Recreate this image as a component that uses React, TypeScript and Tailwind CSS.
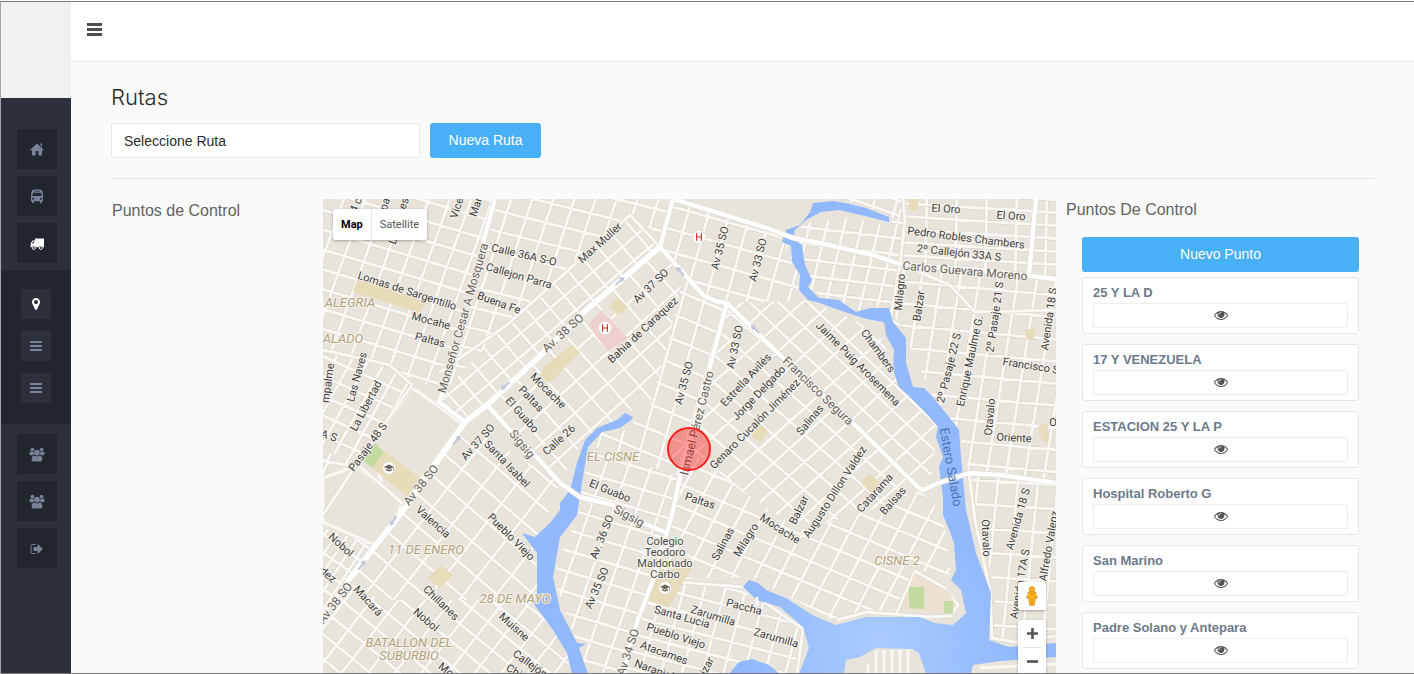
import React from "react";

type Pt = [number, number];

/* ---------- Icons ---------- */

const HomeIcon = () => (
  <svg viewBox="0 0 14 13" className="h-[13px] w-[14px]" fill="currentColor" aria-hidden="true">
    <path d="M7 0.4 13.8 6.8 12.9 7.4H12V12.4H8.4V8H5.7V12.4H2V7.4H1L0.2 6.8Z" />
    <path d="M9.8 0.6H12V4L10.8 2.9V1.6H9.8Z" />
  </svg>
);

const BusIcon = () => (
  <svg viewBox="0 0 14 15" className="h-[15px] w-[14px]" fill="currentColor" aria-hidden="true">
    <path
      fillRule="evenodd"
      d="M4 0.5H10Q12.4 0.7 12.6 3L13 7V12.3H12V13.3Q12 14.4 11 14.4T10 13.3V12.3H4V13.3Q4 14.4 3 14.4T2 13.3V12.3H1V7L1.4 3Q1.6 0.7 4 0.5ZM4.3 1.7V2.5H9.7V1.7ZM2.9 3.8 2.4 7H11.6L11.1 3.8ZM3 8.8A1 1 0 1 0 3 10.8 1 1 0 0 0 3 8.8ZM11 8.8A1 1 0 1 0 11 10.8 1 1 0 0 0 11 8.8Z"
    />
  </svg>
);

const TruckIcon = () => (
  <svg viewBox="0 0 14 12" className="h-[12px] w-[14px]" fill="currentColor" aria-hidden="true">
    <path fillRule="evenodd" d="M5 0.5H14V9.2H12.9A2.2 2.2 0 0 0 8.7 9.2H6A2.2 2.2 0 0 0 1.8 9.2H0.3V8.4H0.7V5.3L2.6 2.6H5ZM2 5.3H4.2V3.6H3.1Z" />
    <circle cx="3.9" cy="10" r="1.5" fill="none" stroke="currentColor" strokeWidth="0.9" />
    <circle cx="10.8" cy="10" r="1.5" fill="none" stroke="currentColor" strokeWidth="0.9" />
  </svg>
);

const MarkerIcon = () => (
  <svg viewBox="0 0 1792 1792" className="size-[14px]" fill="currentColor" aria-hidden="true">
    <path d="M1152 640q0-106-75-181t-181-75-181 75-75 181 75 181 181 75 181-75 75-181zm256 0q0 109-33 179l-364 774q-16 33-47.5 52t-67.5 19-67.5-19-46.5-52l-365-774q-33-70-33-179 0-212 150-362t362-150 362 150 150 362z" />
  </svg>
);

const ListIcon = () => (
  <svg viewBox="0 0 12 10" className="h-[10px] w-[12px]" fill="currentColor" aria-hidden="true">
    <path d="M0 0H12V2H0ZM0 4H12V6H0ZM0 8H12V10H0Z" />
  </svg>
);

const GroupIcon = () => (
  <svg viewBox="0 0 16 15" className="h-[15px] w-[16px]" fill="currentColor" aria-hidden="true">
    <circle cx="3.4" cy="2.6" r="1.9" />
    <circle cx="12.6" cy="2.6" r="1.9" />
    <ellipse cx="2.7" cy="6.6" rx="2.4" ry="2" />
    <ellipse cx="13.3" cy="6.6" rx="2.4" ry="2" />
    <circle cx="8" cy="5.6" r="2.9" />
    <path d="M5.2 8.4Q8 10.3 10.8 8.4 13.4 8.8 13.4 12.4 13.4 14.6 11.4 14.6H4.6Q2.6 14.6 2.6 12.4 2.6 8.8 5.2 8.4Z" />
  </svg>
);

const SignOutIcon = () => (
  <svg viewBox="0 0 1792 1792" className="size-[14px]" fill="currentColor" aria-hidden="true">
    <path d="M704 1440q0 4 1 20t.5 26.5-3 23.5-10 19.5-20.5 6.5h-320q-119 0-203.5-84.5t-84.5-203.5v-704q0-119 84.5-203.5t203.5-84.5h320q13 0 22.5 9.5t9.5 22.5q0 4 1 20t.5 26.5-3 23.5-10 19.5-20.5 6.5h-320q-66 0-113 47t-47 113v704q0 66 47 113t113 47h312l11.5 1 11.5 3 8 5.5 7 9 2 13.5zm928-544q0 26-19 45l-544 544q-19 19-45 19t-45-19-19-45v-288h-448q-26 0-45-19t-19-45v-384q0-26 19-45t45-19h448v-288q0-26 19-45t45-19 45 19l544 544q19 19 19 45z" />
  </svg>
);

const EyeIcon = () => (
  <svg viewBox="0 0 1792 1792" className="size-[14px]" fill="currentColor" aria-hidden="true">
    <path d="M1664 960q-152-236-381-353 61 104 61 225 0 185-131.5 316.5t-316.5 131.5-316.5-131.5-131.5-316.5q0-121 61-225-229 117-381 353 133 205 333.5 326.5t434.5 121.5 434.5-121.5 333.5-326.5zm-720-384q0-20-14-34t-34-14q-125 0-214.5 89.5t-89.5 214.5q0 20 14 34t34 14 34-14 14-34q0-86 61-147t147-61q20 0 34-14t14-34zm848 384q0 34-20 69-140 230-376.5 368.5t-499.5 138.5-499.5-139-376.5-368q-20-35-20-69t20-69q140-229 376.5-368t499.5-139 499.5 139 376.5 368q20 35 20 69z" />
  </svg>
);

/* ---------- Map data ---------- */

// A district is an outline filled by families of parallel streets: [dx, dy, spacing, offset].
type District = { area: string; streets: [number, number, number, number][] };

const districts: District[] = [
  { area: "323,199 495,199 483,243 447,388 412,383 390,365 323,350", streets: [[100, 30, 19, 3], [-36, 100, 20, 6]] },
  { area: "495,199 673,199 665,238 630,215 507,325 447,388 483,243", streets: [[100, 25, 20, 8], [-33, 100, 20, 4]] },
  { area: "630,215 660,247 465,422 439,402 447,388 507,325", streets: [[85, 100, 19, 5], [-100, 85, 18, 8]] },
  { area: "660,247 487,405 560,483 583,440 625,413 650,405 668,345 683,275", streets: [[-100, 90, 23, 2], [88, 100, 22, 5]] },
  { area: "683,275 703,295 727,303 713,355 680,477 590,445 602,432 625,430 650,405 668,345", streets: [[-28, 100, 21, 2], [100, 42, 23, 9]] },
  { area: "673,199 767,228 785,240 805,290 810,300 727,303 703,295 660,247", streets: [[-28, 100, 20, 2], [100, 28, 22, 4]] },
  { area: "727,303 713,355 688,450 740,490 800,530 870,510 921,490 853,423", streets: [[-100, 90, 20, 4], [100, 88, 21, 7]] },
  { area: "727,303 810,300 855,320 883,340 893,370 938,427 930,480 921,490", streets: [[-100, 90, 20, 4], [100, 95, 20, 2]] },
  { area: "672,515 688,450 740,490 800,530 870,510 921,490 943,515 951,575 915,570 898,610 836,621 749,577 653,580", streets: [[100, 42, 21, 6], [-52, 100, 21, 3]] },
  { area: "590,445 680,477 653,580 625,674 588,674 553,577 577,515", streets: [[100, 30, 20, 5], [-35, 100, 22, 4]] },
  { area: "653,580 743,587 803,629 797,674 625,674", streets: [[100, 26, 17, 2], [-27, 100, 20, 6]] },
  { area: "465,422 560,483 540,535 537,600 480,600 380,600 347,582 402,515", streets: [[-78, 100, 26, 3], [100, 86, 24, 6]] },
  { area: "347,582 380,600 537,600 567,653 572,674 323,674 323,615", streets: [[-78, 100, 21, 3], [100, 82, 19, 6]] },
  { area: "323,350 390,365 412,385 373,440 355,462 323,450", streets: [[-55, 100, 15, 3], [100, 45, 18, 6]] },
  { area: "323,450 355,462 323,515", streets: [[-40, 100, 18, 3], [100, 20, 18, 6]] },
  { area: "323,528 375,545 347,582 323,610", streets: [[-65, 100, 10, 3], [100, 70, 15, 6]] },
  { area: "806,222 850,218 889,225 903,205 903,265 890,308 856,312 806,288 782,242", streets: [[100, 12, 16, 3], [-24, 100, 17, 1]] },
  { area: "812,199 903,199 900,225 889,215 850,202", streets: [[100, 35, 14, 3], [-30, 100, 22, 1]] },
  { area: "903,199 1056,199 1056,279 903,265", streets: [[100, 6, 13, 2], [-2, 100, 30, 8]] },
  { area: "903,265 1056,279 1056,483 969,473 959,430 933,397 906,338 890,308", streets: [[100, 9, 22, 3], [-16, 100, 19, 5]] },
  { area: "969,473 1056,483 1056,641 993,638 995,593", streets: [[100, 6, 24, 3], [-10, 100, 20, 9]] },
];

function hatch([dx, dy, gap, phase]: [number, number, number, number]): string {
  const len = Math.hypot(dx, dy);
  const ux = dx / len;
  const uy = dy / len;
  let d = "";
  for (let k = -40; k <= 40; k++) {
    const off = k * gap + phase;
    const cx = 690 - uy * off;
    const cy = 436 + ux * off;
    d += `M${(cx - ux * 500).toFixed(1)} ${(cy - uy * 500).toFixed(1)}L${(cx + ux * 500).toFixed(1)} ${(cy + uy * 500).toFixed(1)}`;
  }
  return d;
}

const lanes = [
  "M630 215 507 325 440 372",
  "M630 215 660 247",
  "M412 385 373 440 323 515",
  "M355 462 402 503",
  "M323 350 390 365 412 385",
  "M727 303 690 440 672 458",
  "M903 199 905 220 900 265 890 320 900 325",
  "M903 265 950 285 975 312 1056 310",
  "M915 571 945 588 958 605 950 616 930 617 866 612 838 620",
  "M915 571 897 612",
  "M969 473 975 520 990 590 992 638 1015 642 1056 636",
  "M653 580 743 587 803 629 797 674",
];

const water = [
  "M810 212 800 225 786 230 782 242 791 246 792 262 800 275 799 290 808 300 820 303 839 310 866 319 884 322 886 335 894 350 893 370 899 387 913 400 926 413 938 427 936 437 943 457 939 467 943 497 943 515 948 527 954 543 956 570 951 580 961 590 966 613 953 625 935 623 919 617 866 617 836 625 814 616 786 598 766 590 758 583 749 580 743 587 757 600 780 607 803 627 809 648 799 674H844L846 660 860 657 876 648 912 649 919 653 926 674H971L973 665 1000 661 1056 657V643L1009 647 989 640 991 593 976 553 966 510 961 457 959 430 949 417 933 397 924 388 913 387 906 363 906 338 893 322 889 308 870 308 856 312 839 300 819 298 808 287 812 280 805 265 802 245 793 238 795 230 806 220 821 212 839 210 869 217 889 222 889 217 866 208 850 204 833 201 813 203Z",
  "M625 413 633 417 630 421 620 428 602 432 588 447 583 477 577 515 560 537 553 577 560 610 577 643 586 644 579 648 588 674H572L567 653 553 630 533 603 537 600 537 553 522 533 535 537 550 523 560 510 560 503 570 490 577 463 585 440 597 428 617 420Z",
  "M729 674 739 662 752 659 769 665 780 674Z",
];

const avenues = [
  "M673 199 660 247 585 311 543 353 487 405 465 422 402 512 347 582 323 615",
  "M673 199 767 228 793 238 820 243 873 255 903 265 979 270 1056 279",
  "M660 247 703 295 715 301 727 303 780 355 853 423 918 487Q922 492 927 488L939 483 969 473 1000 475 1056 483",
  "M727 303 713 355 680 477 672 515 653 580 633 633 624 674",
  "M487 405 510 430 537 457 560 483 580 497 613 505 643 523 667 533",
  "M495 199 483 243",
  "M443 393 439 402 465 422",
  "M1036 199 1029 275",
];

const parks: [string, string][] = [
  ["358,277 427,302 420,313 353,292", "#e6dcb9"],
  ["602,310 628,338 608,352 588,325", "#edd0cf"],
  ["617,297 628,307 618,315 608,307", "#e6dcb9"],
  ["538,377 545,366 572,345 580,352 550,383", "#e6dcb9"],
  ["383,450 420,478 408,497 372,468", "#e6dcb9"],
  ["375,443 384,452 372,468 363,460", "#c3dba0"],
  ["760,423 769,432 760,443 751,435", "#e6dcb9"],
  ["869,473 881,483 871,493 861,483", "#e6dcb9"],
  ["1037,427 1048,423 1048,443 1042,440", "#e6dcb9"],
  ["440,565 453,575 440,588 428,578", "#e6dcb9"],
  ["653,570 692,568 668,608 648,600", "#e6dcb9"],
  ["914,574 949,591 956,606 948,614 901,609", "#ece0d0"],
  ["909,587 924,587 924,609 909,608", "#c3dba0"],
  ["944,601 953,601 953,614 944,613", "#c3dba0"],
  ["909,199 919,199 917,211 909,210", "#e6dcb9"],
  ["1026,329 1035,330 1034,340 1026,339", "#e6dcb9"],
];

const openBlocks = [
  "412,388 437,405 462,424 402,506 383,490 372,444",
  "323,478 357,466 402,503 398,514 375,545 323,522",
];

// [text, x, y, angle]
type Label = [string, number, number, number];

const streetLabels: Label[] = [
  ["Vice", 457, 208, -72],
  ["Mar", 476, 207, -72],
  ["4 c", 356, 205, -65],
  ["pa", 385, 204, -72],
  ["ves", 403, 206, -72],
  ["L", 393, 241, -72],
  ["Calle 36A S-O", 524, 255, 13],
  ["Callejon Parra", 519, 276, 16],
  ["Buena Fe", 499, 303, 20],
  ["Lomas de Sargentillo", 407, 291, 18],
  ["Mocahe", 431, 321, 15],
  ["Paltas", 430, 340, 15],
  ["Max Muller", 600, 243, -42],
  ["Av 37 SO", 651, 286, -44],
  ["Bahia de Caraquez", 643, 330, -43],
  ["Av 35 SO", 720, 248, -76],
  ["Av 33 SO", 758, 260, -76],
  ["Av 33 SO", 735, 347, -78],
  ["El Oro", 946, 209, 3],
  ["El Oro", 1011, 216, 4],
  ["Pedro Robles Chambers", 966, 238, 7],
  ["2º Callejón 33A S", 959, 253, 6],
  ["Milagro", 900, 292, -85],
  ["Balzar", 919, 306, -82],
  ["2º Pasaje 21 S", 995, 317, -82],
  ["Avenida 18 S", 1049, 319, -82],
  ["Enrique Maulme G.", 970, 361, -78],
  ["2º Pasaje 22 S", 949, 368, -76],
  ["Jaime Puig Arosemena", 858, 364, 45],
  ["Chambers", 878, 351, 54],
  ["Francisco S", 1031, 366, 9],
  ["O", 1053, 422, 0],
  ["Otavalo", 990, 417, -85],
  ["Oriente", 1014, 438, 3],
  ["Avenida 18 S", 1018, 519, -74],
  ["Estrella Avilés", 746, 380, -47],
  ["Jorge Delgado", 759, 393, -46],
  ["Genaro Cucalón Jiménez", 755, 424, -45],
  ["Av 35 SO", 684, 383, -75],
  ["Salinas", 810, 420, -50],
  ["Augusto Dillon Valdez", 835, 492, -57],
  ["Catarama", 875, 493, -48],
  ["Balsas", 893, 501, -48],
  ["Balzar", 799, 510, -64],
  ["Paltas", 700, 501, 18],
  ["El Guabo", 610, 491, 22],
  ["Av. 36 SO", 602, 537, -68],
  ["Av 35 SO", 597, 588, -66],
  ["Mocache", 548, 391, 45],
  ["Paltas", 531, 399, 46],
  ["El Guabo", 522, 415, 48],
  ["Calle 26", 559, 440, -42],
  ["Av 37 SO", 478, 442, -48],
  ["Santa Isabel", 507, 464, 46],
  ["Pasaje 48 S", 368, 447, -54],
  ["La Libertad", 366, 406, -62],
  ["Las Naves", 357, 377, -75],
  ["mpalme", 328, 383, -82],
  ["A S", 329, 436, 18],
  ["Valencia", 433, 522, 42],
  ["Pueblo Viejo", 511, 537, 45],
  ["Nobol", 341, 545, 42],
  ["dez", 328, 575, 40],
  ["Macará", 368, 601, 48],
  ["Chillanes", 441, 603, 44],
  ["Nobol", 426, 620, 40],
  ["Muisne", 514, 627, 42],
  ["Callejón", 530, 664, 36],
  ["Mo", 446, 670, 38],
  ["Chi", 514, 671, 30],
  ["Santa Lucia", 682, 617, 16],
  ["Pueblo Viejo", 676, 636, 18],
  ["Atacames", 664, 653, 20],
  ["Naranjal", 654, 670, 20],
  ["Zarumilla", 713, 616, 17],
  ["Paccha", 744, 607, 15],
  ["Zarumilla", 776, 638, 16],
  ["Salinas", 723, 544, -62],
  ["Milagro", 746, 540, -58],
  ["Mocache", 780, 529, 33],
  ["Otavalo", 986, 538, 88],
  ["Avenida 17A S", 1020, 584, -80],
  ["Alfredo Valenz", 1049, 546, -80],
  ["izar", 707, 666, -62],
];

const avenueLabels: Label[] = [
  ["Monseñor Cesar A Mosquera", 463, 318, -74],
  ["Av. 38 SO", 563, 333, -42],
  ["Av 38 SO", 421, 485, -51],
  ["Av 38 SO", 335, 603, -52],
  ["Av 34 SO", 628, 652, -72],
  ["Carlos Guevara Moreno", 965, 271, 5],
  ["Francisco Segura", 818, 391, 44],
  ["Ismael Pérez Castro", 697, 423, -76],
  ["Sigsig", 522, 444, 50],
  ["Sigsig", 629, 516, 28],
];

const areaLabels: [string, number, number][] = [
  ["ALEGRIA", 350, 302],
  ["ALADO", 343, 338],
  ["EL CISNE", 613, 456],
  ["11 DE ENERO", 426, 549],
  ["28 DE MAYO", 515, 598],
  ["BATALLON DEL", 409, 642],
  ["SUBURBIO", 409, 655],
  ["CISNE 2", 897, 560],
];

const arrows: [number, number, number][] = [
  [620, 281, -41],
  [680, 271, -130],
  [755, 329, -135],
  [505, 386, 138],
  [457, 440, -52],
  [393, 521, 125],
  [362, 565, -52],
];

const hospitals: Pt[] = [[605, 328], [699, 237]];
const schools: Pt[] = [[389, 468], [665, 588]];

function LabelText({ label, size }: { label: Label; size: number }) {
  const [text, x, y, angle] = label;
  return (
    <text x={x} y={y} fontSize={size} textAnchor="middle" dominantBaseline="central" transform={`rotate(${angle} ${x} ${y})`}>
      {text}
    </text>
  );
}

function CityMap() {
  return (
    <svg
      viewBox="323 199 733 474"
      preserveAspectRatio="xMinYMin slice"
      className="block h-full w-full font-['Roboto',sans-serif]"
      role="img"
      aria-label="Mapa de puntos de control"
    >
      <defs>
        <radialGradient id="bay" gradientUnits="userSpaceOnUse" cx="880" cy="645" r="130">
          <stop offset="0" stopColor="#a9cbff" />
          <stop offset="1" stopColor="#92b9fd" />
        </radialGradient>
        {districts.map((d, i) => (
          <clipPath id={`district-${i}`} key={i}>
            <polygon points={d.area} />
          </clipPath>
        ))}
      </defs>
      <rect x="323" y="199" width="1400" height="1000" fill="#e8e4dc" />

      {districts.map((d, i) => {
        const path = d.streets.map(hatch).join("");
        return (
          <g key={i} clipPath={`url(#district-${i})`} fill="none">
            <path d={path} stroke="#ddd8ce" strokeWidth="4.2" />
            <path d={path} stroke="#faf8f5" strokeWidth="2.8" />
          </g>
        );
      })}
      {openBlocks.map((p) => (
        <polygon key={p} points={p} fill="#e8e4dc" stroke="#faf8f5" strokeWidth="3" />
      ))}
      <g fill="none" strokeLinejoin="round" strokeLinecap="round">
        <path d={lanes.join("")} stroke="#ddd8ce" strokeWidth="4.4" />
        <path d={lanes.join("")} stroke="#faf8f5" strokeWidth="3" />
      </g>
      {parks.map(([points, fill]) => (
        <polygon key={points} points={points} fill={fill} />
      ))}
      <path d={water.join("")} fill="url(#bay)" />
      <path d="M876 651V674M884 650V674M892 650V674M900 650V674M908 650V674M868 664V674" stroke="#faf8f5" strokeWidth="3" />
      <path d="M980 668 1056 664M757 597V606" stroke="#faf8f5" strokeWidth="3" />
      <g fill="none" strokeLinejoin="round">
        <path d={avenues.join("")} stroke="#e0dbd2" strokeWidth="5.6" />
        <path d={avenues.join("")} stroke="#ffffff" strokeWidth="4.4" />
        <path d="M660 247 585 311 543 353 487 405 465 422 402 512 347 582" stroke="#ffffff" strokeWidth="5.6" />
      </g>
      {arrows.map(([x, y, a]) => (
        <path key={`${x}-${y}`} d="M-6-1H1V-3L6 0 1 3V1H-6Z" fill="#bfc5da" transform={`translate(${x} ${y}) rotate(${a})`} />
      ))}

      <g stroke="#f5f2ec" strokeWidth="2" strokeLinejoin="round" paintOrder="stroke">
        <g fill="#3d3d3d">
          {streetLabels.map((l, i) => (
            <LabelText key={i} label={l} size={11} />
          ))}
        </g>
        <g fill="#66635f">
          {avenueLabels.map((l, i) => (
            <LabelText key={i} label={l} size={12} />
          ))}
        </g>
        <g fill="#b0a47c" fontStyle="italic">
          {areaLabels.map(([t, x, y]) => (
            <LabelText key={t} label={[t, x, y, 0]} size={13} />
          ))}
        </g>
        <g fill="#4a4a4a">
          {["Colegio", "Teodoro", "Maldonado", "Carbo"].map((t, i) => (
            <LabelText key={t} label={[t, 665, 541 + i * 11, 0]} size={11} />
          ))}
        </g>
      </g>
      <g fill="#4c74b4">
        <LabelText label={["Estero Salado", 951, 467, 80]} size={13} />
      </g>

      {hospitals.map(([x, y]) => (
        <g key={x}>
          <circle cx={x} cy={y} r="6.5" fill="#fff" stroke="#dcd5cf" strokeWidth="0.6" />
          <path d={`M${x - 2.4} ${y - 3.8}V${y + 3.8}M${x + 2.4} ${y - 3.8}V${y + 3.8}M${x - 2.4} ${y}H${x + 2.4}`} stroke="#c9302c" strokeWidth="1.1" />
        </g>
      ))}
      {schools.map(([x, y]) => (
        <g key={x} transform={`translate(${x} ${y})`}>
          <circle r="6.5" fill="#fff" stroke="#d3ccb8" strokeWidth="0.6" />
          <path d="M-5-1 0-3.4 5-1 0 1.2ZM-2.8 0.7V2.6Q0 4.2 2.8 2.6V0.7L0 2ZM4-0.6H4.6V3H4Z" fill="#6b6257" />
        </g>
      ))}
      <circle cx="689" cy="449" r="21" fill="#ff0000" fillOpacity="0.36" stroke="#f8201f" strokeWidth="2" />
    </svg>
  );
}

/* ---------- Page ---------- */

const mainLinks = [
  { label: "Inicio", icon: HomeIcon, active: false },
  { label: "Buses", icon: BusIcon, active: false },
  { label: "Rutas", icon: TruckIcon, active: true },
];
const subLinks = [
  { label: "Puntos", icon: MarkerIcon, active: true },
  { label: "Listado de rutas", icon: ListIcon, active: false },
  { label: "Listado de puntos", icon: ListIcon, active: false },
];
const userLinks = [
  { label: "Usuarios", icon: GroupIcon, active: false },
  { label: "Grupos", icon: GroupIcon, active: false },
  { label: "Salir", icon: SignOutIcon, active: false },
];

type NavLink = (typeof mainLinks)[number];

function NavItem({ item, small }: { item: NavLink; small?: boolean }) {
  const Icon = item.icon;
  return (
    <a
      href="#"
      aria-label={item.label}
      className={`flex items-center justify-center ${small ? "size-[30px] bg-[#2b303b]" : "size-10 bg-[#21252d] pt-px"} ${
        item.active ? "text-white" : "text-[#788195]"
      }`}
    >
      <Icon />
    </a>
  );
}

const points = ["25 Y LA D", "17 Y VENEZUELA", "ESTACION 25 Y LA P", "Hospital Roberto G", "San Marino", "Padre Solano y Antepara"];

export default function App() {
  return (
    <div className="h-screen bg-white pt-px font-['Liberation_Sans',Arial,sans-serif] text-sm">
      <div className="flex h-full overflow-hidden border-y border-l border-y-[#777777] border-l-[#a5a5a5] bg-[#fafafa]">
        <aside className="flex w-[70px] shrink-0 flex-col bg-[#2b303b]">
          <div className="h-24 shrink-0 bg-[#f1f1f1]" />
          <nav className="flex flex-col pt-[31px]">
            <div className="flex flex-col gap-[7px] pb-[7px] pl-4">
              {mainLinks.map((i) => (
                <NavItem key={i.label} item={i} />
              ))}
            </div>
            <div className="flex flex-col gap-3 bg-[#21252d] pt-[19px] pb-[21px] pl-5">
              {subLinks.map((i) => (
                <NavItem key={i.label} item={i} small />
              ))}
            </div>
            <div className="flex flex-col gap-[7px] pt-[10px] pl-4">
              {userLinks.map((i) => (
                <NavItem key={i.label} item={i} />
              ))}
            </div>
          </nav>
        </aside>

        <div className="flex min-w-0 flex-1 flex-col">
          <header className="flex h-[60px] shrink-0 items-center border-b border-[#e8e8e8] bg-white px-4">
            <button type="button" aria-label="Menú" className="mb-1 text-[#4d4d4d]">
              <svg viewBox="0 0 15 13" className="h-[13px] w-[15px]" fill="currentColor" aria-hidden="true">
                <path d="M0 0H15V3H0ZM0 5H15V8H0ZM0 10H15V13H0Z" />
              </svg>
            </button>
          </header>

          <main className="flex min-h-0 flex-1 flex-col px-10 pt-5">
            <h1 className="font-['Inter','Liberation_Sans',sans-serif] text-[22px] leading-[30px] font-light text-[#2c2c2c]">Rutas</h1>
            <div className="mt-[11px] flex shrink-0 gap-[10px]">
              <select
                aria-label="Seleccione Ruta"
                className="h-[35px] w-[309px] appearance-none rounded-[2px] border border-[#e8e8e8] bg-white px-3 text-sm text-[#2c2c2c]"
              >
                <option>Seleccione Ruta</option>
              </select>
              <button type="button" className="h-[35px] w-[111px] rounded-[3px] bg-[#48b0f7] pb-0.5 text-sm text-white">
                Nueva Ruta
              </button>
            </div>
            <hr className="mt-5 shrink-0 border-[#e3e3e3]" />

            <div className="mt-5 flex min-h-0 flex-1">
              <h2 className="w-[212px] shrink-0 pl-px text-base leading-6 text-[#626262]">Puntos de Control</h2>

              <section className="relative min-w-0 flex-1 overflow-hidden">
                <CityMap />
                <div className="absolute top-[10px] left-[10px] flex h-[31px] rounded-[2px] bg-white font-['Roboto',sans-serif] text-[11px] shadow-[0_1px_3px_rgba(0,0,0,0.3)]">
                  <button type="button" className="border-r border-[#e5e5e5] px-2 font-bold text-black">
                    Map
                  </button>
                  <button type="button" className="px-2 text-[#565656]">
                    Satellite
                  </button>
                </div>
                <div className="absolute right-[10px] -bottom-[2px] flex w-7 flex-col gap-[10px]">
                  <button type="button" aria-label="Street View" className="flex h-7 items-center justify-center rounded-[2px] bg-white shadow-[0_1px_3px_rgba(0,0,0,0.3)]">
                    <svg viewBox="0 0 12 20" className="h-5 w-3" aria-hidden="true">
                      <path d="M2.5 6Q6 4.5 9.5 6L11.3 12 10 12.8 9 11V14L8.4 19.2H3.6L3 14V11L2 12.8 0.7 12Z" fill="#fbb41d" stroke="#d88a14" strokeWidth="0.7" />
                      <path d="M6 13V19M4 6.3 6 8.5 8 6.3" fill="none" stroke="#c97a10" strokeWidth="0.8" />
                      <circle cx="6" cy="3.2" r="2.7" fill="#fbb41d" stroke="#d88a14" strokeWidth="0.7" />
                    </svg>
                  </button>
                  <div className="flex flex-col rounded-[2px] bg-white px-[5px] text-[#555555] shadow-[0_1px_3px_rgba(0,0,0,0.3)]">
                    <button type="button" aria-label="Acercar" className="flex h-7 items-center justify-center border-b border-[#e2e2e2]">
                      <svg viewBox="0 0 10 10" className="size-[11px]" fill="currentColor" aria-hidden="true">
                        <path d="M3.8 0H6.2V3.8H10V6.2H6.2V10H3.8V6.2H0V3.8H3.8Z" />
                      </svg>
                    </button>
                    <button type="button" aria-label="Alejar" className="flex h-[27px] items-center justify-center">
                      <svg viewBox="0 0 10 10" className="size-[11px]" fill="currentColor" aria-hidden="true">
                        <path d="M0 3.8H10V6.2H0Z" />
                      </svg>
                    </button>
                  </div>
                </div>
              </section>

              <section className="w-[318px] shrink-0 overflow-hidden pr-[15px] pl-[10px]">
                <h2 className="text-base leading-[22px] text-[#626262]">Puntos De Control</h2>
                <div className="mt-4 pl-4">
                  <button type="button" className="h-[35px] w-full rounded-[3px] bg-[#48b0f7] pb-0.5 text-sm text-white">
                    Nuevo Punto
                  </button>
                  <ul className="mt-[5px] flex flex-col gap-[10px]">
                    {points.map((name) => (
                      <li key={name} className="rounded-[3px] border border-[#e2e5e8] bg-white px-[10px] pb-[5px]">
                        <h3 className="pt-[5px] text-[13px] leading-5 font-bold text-[#6d7a8a]">{name}</h3>
                        <button
                          type="button"
                          aria-label={`Ver ${name}`}
                          className="flex h-[25px] w-full items-center justify-center rounded-[2px] border border-[#eeeeee] bg-white pb-0.5 text-[#555555]"
                        >
                          <EyeIcon />
                        </button>
                      </li>
                    ))}
                  </ul>
                </div>
              </section>
            </div>
          </main>
        </div>
      </div>
    </div>
  );
}
